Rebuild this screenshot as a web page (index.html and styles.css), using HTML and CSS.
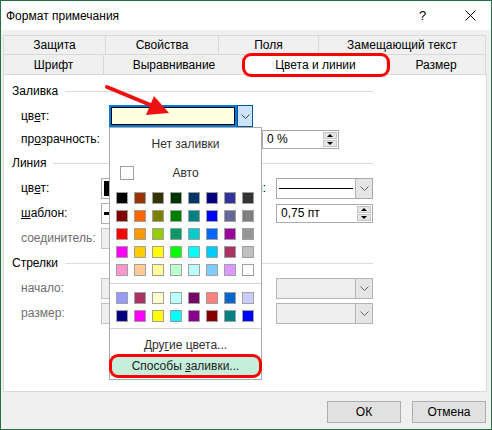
FILE: index.html
```html
<!DOCTYPE html>
<html>
<head>
<meta charset="utf-8">
<link rel="stylesheet" href="styles.css">
</head>
<body>
<div class="window">
  <div class="titlebar">
    <span class="title">Формат примечания</span>
    <span class="help">?</span>
    <span class="close"><svg width="11" height="11" viewBox="0 0 11 11"><path d="M0.5 0.5L10.5 10.5M10.5 0.5L0.5 10.5" stroke="#000" stroke-width="1" fill="none"/></svg></span>
  </div>
  <div class="content">
    <div class="tabs">
      <div class="tabrow">
        <div class="tab t1">Защита</div>
        <div class="tab t2">Свойства</div>
        <div class="tab t3">Поля</div>
        <div class="tab t4">Замещающий текст</div>
      </div>
      <div class="tabrow">
        <div class="tab t5">Шрифт</div>
        <div class="tab t6">Выравнивание</div>
        <div class="tab t7 active">Цвета и линии<span class="ring tabring"></span></div>
        <div class="tab t8">Размер</div>
      </div>
    </div>
    <div class="panel">
      <div class="sechead"><span>Заливка</span><i class="hl"></i></div>
      <div class="row r-fill">
        <span class="lbl wide">цв<u>е</u>т:</span>
        <div class="fillcombo">
          <div class="fillswatch"><div class="fillinner"></div></div>
          <div class="ddbtn blue"><svg width="9" height="5" viewBox="0 0 9 5"><path d="M0.5 0.5L4.5 4.5L8.5 0.5" fill="none" stroke="#404040"/></svg></div>
          <div class="popup">
            <div class="pitem nofill">Нет заливки</div>
            <div class="pitem auto"><span class="autobox"></span><span class="autotxt">Авто</span></div>
            <div class="palette">
              <i style="background:#000000"></i><i style="background:#993300"></i><i style="background:#333300"></i><i style="background:#003300"></i><i style="background:#003366"></i><i style="background:#000080"></i><i style="background:#333399"></i><i style="background:#333333"></i>
              <i style="background:#800000"></i><i style="background:#FF6600"></i><i style="background:#808000"></i><i style="background:#008000"></i><i style="background:#008080"></i><i style="background:#0000FF"></i><i style="background:#666699"></i><i style="background:#808080"></i>
              <i style="background:#FF0000"></i><i style="background:#FF9900"></i><i style="background:#99CC00"></i><i style="background:#009966"></i><i style="background:#00CCCC"></i><i style="background:#0066FF"></i><i style="background:#990099"></i><i style="background:#969696"></i>
              <i style="background:#FF00FF"></i><i style="background:#FFCC00"></i><i style="background:#FFFF00"></i><i style="background:#00FF00"></i><i style="background:#00FFFF"></i><i style="background:#00CCFF"></i><i style="background:#AA3366"></i><i style="background:#C0C0C0"></i>
              <i style="background:#FF99CC"></i><i style="background:#FFCC99"></i><i style="background:#FFFF99"></i><i style="background:#BBFFCC"></i><i style="background:#BBFFFF"></i><i style="background:#80CCFF"></i><i style="background:#DD99FF"></i><i style="background:#FFFFFF"></i>
            </div>
            <div class="psep"></div>
            <div class="palette p2">
              <i style="background:#9999FF"></i><i style="background:#AA3366"></i><i style="background:#FFFFCC"></i><i style="background:#BBFFFF"></i><i style="background:#770066"></i><i style="background:#FF8080"></i><i style="background:#0066CC"></i><i style="background:#CCCCFF"></i>
              <i style="background:#000080"></i><i style="background:#FF00FF"></i><i style="background:#FFFF00"></i><i style="background:#00FFFF"></i><i style="background:#880088"></i><i style="background:#880000"></i><i style="background:#008080"></i><i style="background:#0000FF"></i>
            </div>
            <div class="psep s2"></div>
            <div class="pitem more"><span>Дру<u>г</u>ие цвета...</span></div>
            <div class="pitem effects"><span>Способы <u>з</u>аливки...</span><span class="ring effring"></span></div>
          </div>
        </div>
      </div>
      <div class="row r-transp">
        <span class="lbl wide">пр<u>о</u>зрачность:</span>
        <span class="slider"></span>
        <div class="spin s-transp"><span class="val">0 %</span><span class="arrows"><b class="up"></b><b class="dn"></b></span></div>
      </div>

      <div class="sechead h-line"><span>Линия</span><i class="hl"></i></div>
      <div class="row r1">
        <span class="lbl">цв<u>е</u>т:</span>
        <div class="lcombo"><span class="blackbox"></span></div>
        <span class="rlbl"><span>тип:</span></span>
        <div class="combo"><span class="field"><i class="solid"></i></span><span class="ddbtn"><svg width="9" height="5" viewBox="0 0 9 5"><path d="M0.5 0.5L4.5 4.5L8.5 0.5" fill="none" stroke="#606060"/></svg></span></div>
      </div>
      <div class="row r2">
        <span class="lbl"><u>ш</u>аблон:</span>
        <div class="lcombo"><span class="dash"></span></div>
        <span class="rlbl"></span>
        <div class="spin s-weight"><span class="val">0,75 пт</span><span class="arrows"><b class="up"></b><b class="dn"></b></span></div>
      </div>
      <div class="row r2">
        <span class="lbl dis">соединитель:</span>
        <div class="lcombo disabled"></div>
      </div>

      <div class="sechead h-arrow"><span>Стрелки</span><i class="hl"></i></div>
      <div class="row r1">
        <span class="lbl dis">начало:</span>
        <div class="lcombo disabled"></div>
        <span class="rlbl"></span>
        <div class="combo disabled"><span class="field"></span><span class="ddbtn"><svg width="9" height="5" viewBox="0 0 9 5"><path d="M0.5 0.5L4.5 4.5L8.5 0.5" fill="none" stroke="#606060"/></svg></span></div>
      </div>
      <div class="row r2">
        <span class="lbl dis">размер:</span>
        <div class="lcombo disabled"></div>
        <span class="rlbl"></span>
        <div class="combo disabled"><span class="field"></span><span class="ddbtn"><svg width="9" height="5" viewBox="0 0 9 5"><path d="M0.5 0.5L4.5 4.5L8.5 0.5" fill="none" stroke="#606060"/></svg></span></div>
      </div>
    </div>
    <div class="buttons">
      <button class="btn">ОК</button>
      <button class="btn">Отмена</button>
    </div>
  </div>
  <svg class="arrow" width="200" height="130" viewBox="0 0 200 130">
    <line x1="107" y1="87" x2="153" y2="106" stroke="#ee1111" stroke-width="4" stroke-linecap="round"/>
    <polygon points="169,113 146,115 154,96" fill="#ee1111"/>
  </svg>
</div>
</body>
</html>
```

FILE: styles.css
```css
* { box-sizing: border-box; }
html, body { margin: 0; padding: 0; }
body {
  width: 492px; height: 430px; overflow: hidden;
  font-family: "Liberation Sans", "Noto Sans", sans-serif;
  font-size: 12px; color: #000;
}
.window {
  position: relative;
  width: 492px; height: 430px;
  border: 1px solid #217346;
  background: #f0f0f0;
  display: flex; flex-direction: column;
}
.titlebar {
  height: 29px; background: #fff;
  display: flex; align-items: center;
  padding-left: 5px;
}
.title { flex: 1; font-size: 12px; }
.help { width: 10px; margin-right: 36px; font-size: 13px; }
.close { width: 11px; height: 11px; margin-right: 15px; display: flex; }

.content { padding: 5px 4px 0 2px; display: flex; flex-direction: column; }
.tabrow { display: flex; height: 19px; }
.tabrow + .tabrow { height: 20px; }
.tab {
  border: 1px solid #d9d9d9; border-bottom: none;
  display: flex; align-items: center; justify-content: center;
  background: #f0f0f0; line-height: 1;
  margin-right: -1px;
}
.t1 { width: 103px; } .t2 { width: 114px; } .t3 { width: 101px; } .t4 { width: 168px; }
.t5 { width: 101px; } .t6 { width: 142px; } .t7 { width: 143px; } .t8 { width: 100px; }
.tab.active {
  position: relative; z-index: 2;
  background: #fff; margin-bottom: -1px; height: 21px;
}
.ring {
  position: absolute; border: 3px solid #ff0000; border-radius: 9px;
  pointer-events: none;
}
.tabring { left: -3px; right: -4px; top: -2px; bottom: -2px; }

.panel {
  position: relative; z-index: 1;
  height: 318px; background: #fff;
  border: 1px solid #d9d9d9;
  padding: 8px 0 0 8px;
}
.sechead { width: 361px; height: 16px; display: flex; align-items: center; }
.hl { flex: 1; height: 1px; background: #dcdcdc; margin-left: 7px; }
.h-line { margin-top: 5px; }
.h-arrow { margin-top: 6px; }

.row { display: flex; align-items: center; height: 22px; margin-top: 3px; }
.r-fill { margin-top: 6px; }
.r-transp { margin-top: 1px; }
.r1 { margin-top: 6px; }
.lbl { width: 89px; padding-left: 9px; flex: none; white-space: nowrap; }
.lbl.wide { width: 97px; }
.lbl.dis { color: #6d6d6d; }
u { text-decoration: underline; text-underline-offset: 1px; }

.fillcombo { position: relative; display: flex; height: 22px; z-index: 5; }
.fillswatch {
  width: 128px; height: 22px; border: 2px solid #0078d7; padding: 0;
}
.fillinner { width: 100%; height: 100%; border: 1px solid #000; background: #ffffe2; }
.ddbtn {
  width: 16px; display: flex; align-items: center; justify-content: center;
  background: #e1e1e1; border-left: 1px solid #adadad;
}
.ddbtn.blue { background: #cce4f7; border: 1px solid #005499; width: 16px; }

.popup {
  position: absolute; left: 0; top: 100%;
  width: 153px; height: 253px;
  background: #fff; border: 1px solid #ababab;
  display: flex; flex-direction: column;
}
.pitem { display: flex; align-items: center; justify-content: center; color: #303030; white-space: nowrap; }
.nofill { height: 32px; }
.auto {
  height: 26px; display: grid; grid-template-columns: 24px 1fr 24px; align-items: center;
}
.autobox { width: 14px; height: 14px; border: 1px solid #a0a0a0; margin-left: 10px; }
.autotxt { text-align: center; }
.palette {
  display: grid; grid-template-columns: repeat(8, 12px); grid-auto-rows: 12px;
  gap: 6px; padding-left: 6px; margin-top: 6px;
}
.palette i { display: block; border: 1px solid #a0a0a0; }
.palette.p2 { margin-top: 8px; }
.psep { height: 1px; background: #d4d4d4; margin-top: 7px; }
.psep.s2 { margin-top: 6px; }
.more { height: 23px; margin-top: 4px; }
.effects {
  position: relative; height: 20px; margin: 0 1px;
  background: #c6efdb; color: #202020;
}
.effring { left: -2px; right: -2px; top: -2px; bottom: -2px; }

.slider { width: 153px; flex: none; }
.spin {
  display: flex; height: 19px; border: 1px solid #a9a9a9; background: #fff; flex: none;
}
.s-transp { width: 77px; }
.s-weight { width: 97px; }
.val { flex: 1; padding-left: 4px; display: flex; align-items: center; }
.arrows {
  width: 16px; display: flex; flex-direction: column; padding: 1px; gap: 1px;
}
.arrows b {
  flex: 1; background: #e6e6e6; border: 1px solid #c4c4c4;
  display: flex; align-items: center; justify-content: center;
}
.arrows b::after {
  content: ""; width: 0; height: 0;
  border-left: 3px solid transparent; border-right: 3px solid transparent;
}
.arrows .up::after { border-bottom: 3px solid #000; }
.arrows .dn::after { border-top: 3px solid #000; }

.lcombo {
  width: 150px; height: 21px; flex: none;
  border: 1px solid #adadad; background: #fff;
  display: flex; align-items: center; padding-left: 2px;
}
.lcombo.disabled { background: #efefef; border-color: #c3c3c3; }
.blackbox { width: 5px; height: 15px; background: #000; }
.dash { width: 8px; height: 3px; background: #000; }
.rlbl {
  width: 25px; flex: none; display: flex; justify-content: flex-end;
  padding-right: 10px; white-space: nowrap;
}
.rlbl span { flex: none; }
.combo {
  width: 97px; height: 21px; flex: none; display: flex;
  border: 1px solid #a9a9a9; background: #fff;
}
.combo .field { flex: 1; display: flex; align-items: center; padding: 0 2px; }
.solid { display: block; width: 100%; height: 1px; background: #000; }
.combo.disabled { background: #efefef; border-color: #b5b5b5; }
.combo .ddbtn { background: #e5e5e5; border-left: 1px solid #b5b5b5; width: 17px; }

.buttons { display: flex; justify-content: flex-end; gap: 11px; margin-top: 9px; padding-right: 1px; }
.btn {
  width: 74px; height: 22px; border: 1px solid #adadad; background: #e1e1e1;
  font-family: inherit; font-size: 12px; color: #000; padding: 0;
}
.arrow { position: absolute; left: -1px; top: -1px; pointer-events: none; z-index: 10; }
```
